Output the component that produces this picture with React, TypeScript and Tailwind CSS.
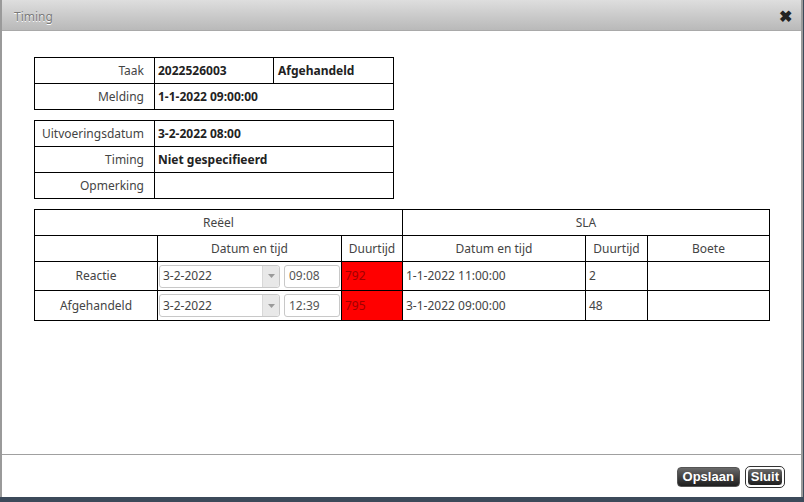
import React from "react";

const F = { fontFamily: '"Noto Sans", "Open Sans", sans-serif' };

function Select({ value }: { value: string }) {
  return (
    <div className="flex h-[23px] w-[121px] items-stretch rounded-[3px] border border-[#c8c8c8] bg-white">
      <div className="flex flex-1 items-center pl-[3px] text-[12px] text-[#444]">{value}</div>
      <div className="flex w-[17px] items-center justify-center rounded-r-[3px] border-l border-[#d8d8d8] bg-[#e8e8e8]">
        <svg width="7" height="4" viewBox="0 0 7 4"><path d="M0 0h7L3.5 4z" fill="#9a9a9a" /></svg>
      </div>
    </div>
  );
}

function TimeInput({ value }: { value: string }) {
  return (
    <div className="flex h-[23px] w-[56px] items-center rounded-[3px] border border-[#c8c8c8] bg-white pl-[4px] text-[12px] text-[#555]">
      {value}
    </div>
  );
}

export default function App() {
  const td = "border border-black";
  return (
    <div className="h-[502px] w-[804px] bg-[#3c4a5a] text-[12px] text-[#222]" style={F}>
      <div className="flex h-[497px] w-[803px] flex-col border-l-2 border-r-2 border-[#9a9a9a] bg-white">
        {/* title bar */}
        <div className="flex h-[31px] items-center justify-between border-b border-[#a9a9a9] bg-gradient-to-b from-[#dedede] to-[#b9b9b9] pl-[12px] pr-[9px] pt-[4px]">
          <span className="text-[12px] text-[#7a7a7a]" style={{ textShadow: "0 1px 0 #fff" }}>Timing</span>
          <span className="-mt-[3px] text-[16px] font-bold leading-none text-[#222]">✖</span>
        </div>
        {/* body */}
        <div className="flex-1 pl-[32px] pt-[26px]">
          <table className="w-[360px] border-collapse">
            <tbody>
              <tr className="h-[26px]">
                <td className={`${td} w-[120px] pr-[10px] text-right text-[#444]`}>Taak</td>
                <td className={`${td} w-[119px] pl-[3px] font-bold`}>2022526003</td>
                <td className={`${td} pl-[4px] font-bold`}>Afgehandeld</td>
              </tr>
              <tr className="h-[26px]">
                <td className={`${td} pr-[10px] text-right text-[#444]`}>Melding</td>
                <td className={`${td} pl-[3px] font-bold`} colSpan={2}>1-1-2022 09:00:00</td>
              </tr>
            </tbody>
          </table>
          <table className="mt-[10px] w-[360px] border-collapse">
            <tbody>
              <tr className="h-[26px]">
                <td className={`${td} w-[120px] pr-[10px] text-right text-[#444]`}>Uitvoeringsdatum</td>
                <td className={`${td} pl-[3px] font-bold`}>3-2-2022 08:00</td>
              </tr>
              <tr className="h-[26px]">
                <td className={`${td} pr-[10px] text-right text-[#444]`}>Timing</td>
                <td className={`${td} pl-[3px] font-bold`}>Niet gespecifieerd</td>
              </tr>
              <tr className="h-[26px]">
                <td className={`${td} pr-[10px] text-right text-[#444]`}>Opmerking</td>
                <td className={`${td}`}></td>
              </tr>
            </tbody>
          </table>
          <table className="mt-[10px] w-[736px] table-fixed border-collapse text-[#444]">
            <colgroup>
              <col className="w-[123px]" />
              <col className="w-[184px]" />
              <col className="w-[61px]" />
              <col className="w-[183px]" />
              <col className="w-[62px]" />
              <col />
            </colgroup>
            <tbody>
              <tr className="h-[26px]">
                <td className={`${td} text-center`} colSpan={3}>Reëel</td>
                <td className={`${td} text-center`} colSpan={3}>SLA</td>
              </tr>
              <tr className="h-[26px]">
                <td className={td}></td>
                <td className={`${td} text-center`}>Datum en tijd</td>
                <td className={`${td} text-center`}>Duurtijd</td>
                <td className={`${td} text-center`}>Datum en tijd</td>
                <td className={`${td} text-center`}>Duurtijd</td>
                <td className={`${td} text-center`}>Boete</td>
              </tr>
              <tr className="h-[29px]">
                <td className={`${td} text-center`}>Reactie</td>
                <td className={`${td} px-[1px]`}>
                  <div className="flex items-center gap-[4px]">
                    <Select value="3-2-2022" />
                    <TimeInput value="09:08" />
                  </div>
                </td>
                <td className={`${td} bg-[#ff0000] pl-[3px] text-[#a00000]`}>792</td>
                <td className={`${td} pl-[3px]`}>1-1-2022 11:00:00</td>
                <td className={`${td} pl-[3px]`}>2</td>
                <td className={td}></td>
              </tr>
              <tr className="h-[30px]">
                <td className={`${td} text-center`}>Afgehandeld</td>
                <td className={`${td} px-[1px]`}>
                  <div className="flex items-center gap-[4px]">
                    <Select value="3-2-2022" />
                    <TimeInput value="12:39" />
                  </div>
                </td>
                <td className={`${td} bg-[#ff0000] pl-[3px] text-[#a00000]`}>795</td>
                <td className={`${td} pl-[3px]`}>3-1-2022 09:00:00</td>
                <td className={`${td} pl-[3px]`}>48</td>
                <td className={td}></td>
              </tr>
            </tbody>
          </table>
        </div>
        {/* footer */}
        <div className="flex h-[43px] items-center justify-end gap-[5px] border-t border-[#a0a0a0] pr-[16px] pt-[1px]">
          <div
            className="flex h-[20px] items-center rounded-[4px] border border-[#555] bg-gradient-to-b from-[#6a6a6a] to-[#1e1e1e] px-[5px] text-[13px] font-bold text-white"
            style={{ fontFamily: '"Liberation Sans", Arial, sans-serif' }}
          >
            Opslaan
          </div>
          <div className="rounded-[5px] border border-[#333] p-[1px]">
            <div
              className="flex h-[18px] items-center rounded-[4px] border border-white bg-gradient-to-b from-[#6a6a6a] to-[#1e1e1e] px-[3px] text-[13px] font-bold text-white"
              style={{ fontFamily: '"Liberation Sans", Arial, sans-serif' }}
            >
              Sluit
            </div>
          </div>
        </div>
      </div>
    </div>
  );
}
